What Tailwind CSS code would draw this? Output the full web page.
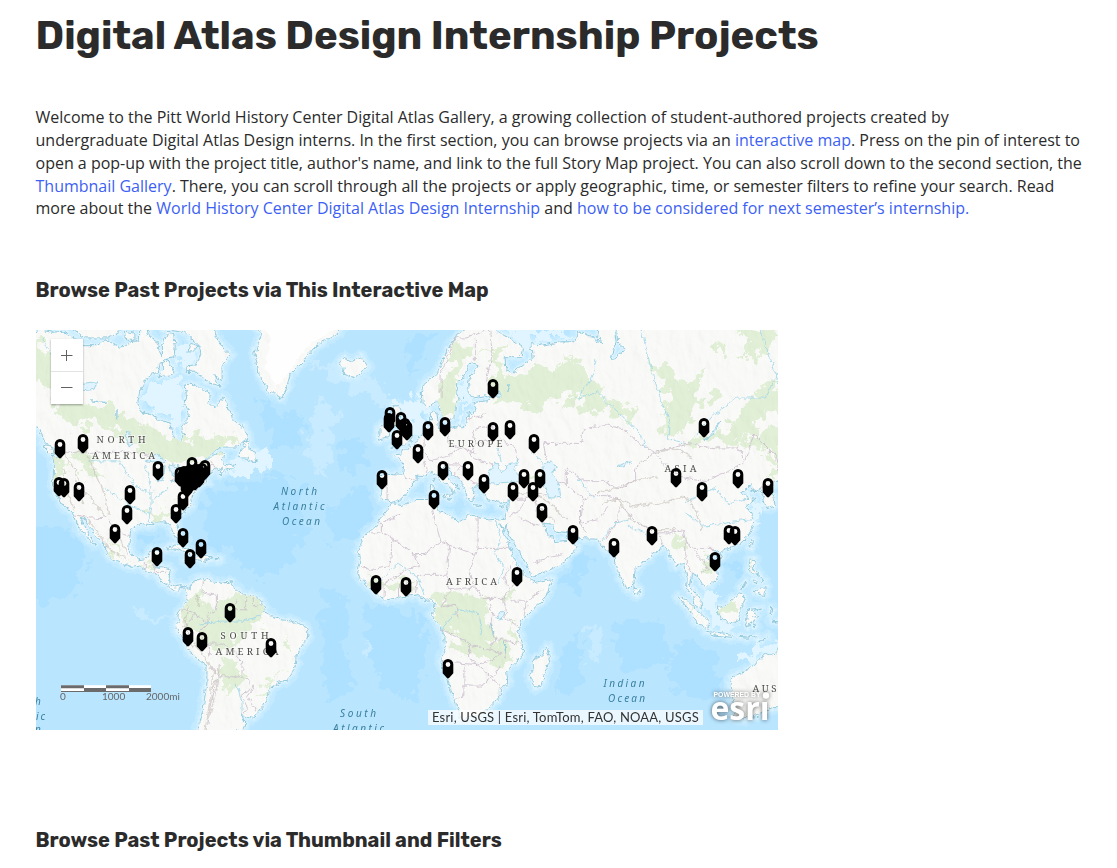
<!DOCTYPE html>
<html lang="en">
<head>
<meta charset="utf-8">
<title>Digital Atlas Design Internship Projects</title>
<script src="https://cdn.jsdelivr.net/npm/@tailwindcss/browser@4"></script>
</head>
<body class="bg-white h-[868px] overflow-hidden text-[#2b2b2b] font-['Open_Sans','Noto_Sans',sans-serif]">
<main class="pl-[35.5px] pt-3">
  <h1 class="h-12 text-[40px] leading-[48px] font-bold whitespace-nowrap font-['Rubik','Inter',sans-serif]">Digital Atlas Design Internship Projects</h1>
  <p class="mt-[46px] text-[16px] leading-[22.85px] whitespace-nowrap">Welcome to the Pitt World History Center Digital Atlas Gallery, a growing collection of student-authored projects created by<br>undergraduate Digital Atlas Design interns. In the first section, you can browse projects via an <a class="text-[#3d5ff5]">interactive map</a>. Press on the pin of interest to<br>open a pop-up with the project title, author's name, and link to the full Story Map project. You can also scroll down to the second section, the<br><a class="text-[#3d5ff5]">Thumbnail Gallery</a>. There, you can scroll through all the projects or apply geographic, time, or semester filters to refine your search. Read<br>more about the <a class="text-[#3d5ff5]">World History Center Digital Atlas Design Internship</a> and <a class="text-[#3d5ff5]">how to be considered for next semester’s internship.</a></p>
  <h2 class="mt-[57.750px] h-6 text-[20px] leading-6 font-bold whitespace-nowrap font-['Rubik','Inter',sans-serif]">Browse Past Projects via This Interactive Map</h2>

  <div class="relative mt-7 ml-[0.5px] w-[742px] h-[400px] overflow-hidden bg-[#b9e5ff]">
    <svg class="block" width="742" height="400" viewBox="36 330 742 400">
      <defs>
        <filter id="rough" x="0" y="0" width="100%" height="100%"><feTurbulence type="fractalNoise" baseFrequency="0.18" numOctaves="3" seed="4" result="n"/><feDisplacementMap in="SourceGraphic" in2="n" scale="6" xChannelSelector="R" yChannelSelector="G"/></filter>
        <filter id="rougher" x="0" y="0" width="100%" height="100%"><feTurbulence type="fractalNoise" baseFrequency="0.08" numOctaves="4" seed="9" result="n"/><feDisplacementMap in="SourceGraphic" in2="n" scale="30" xChannelSelector="R" yChannelSelector="G"/></filter>
        <filter id="relief" x="0" y="0" width="100%" height="100%"><feTurbulence type="fractalNoise" baseFrequency="0.11 0.06" numOctaves="4" seed="3"/><feDiffuseLighting surfaceScale="2.2" lighting-color="#fff"><feDistantLight azimuth="315" elevation="60"/></feDiffuseLighting></filter>
        <clipPath id="landclip"><path id="clipP"/></clipPath>
        <path id="land"/>
        <g id="pin"><path fill="#000" fill-rule="evenodd" d="M-5.300 5.300A5.300 5.300 0 0 1 5.300 5.300V14.300L0.800 19.200H-0.800L-5.300 14.300ZM0 3.100A2.400 2.400 0 1 0 0 7.900A2.400 2.400 0 1 0 0 3.100Z"/></g>
      </defs>
      <rect x="36" y="330" width="742" height="400" fill="#b9e5ff"/>
      <g id="deep" fill="#aee0ff" filter="url(#rougher)"></g>
      <g id="mid" filter="url(#rougher)"></g>
      <g fill="none" stroke-linejoin="round" filter="url(#rough)">
        <use href="#land" stroke="#c9ecff" stroke-width="13" opacity=".6"/>
        <use href="#land" stroke="#d3f0ff" stroke-width="7" opacity=".8"/>
        <use href="#land" stroke="#e0f5ff" stroke-width="3"/>
      </g>
      <g id="shelf" fill="#e0f5ff" filter="url(#rougher)"></g>
      <g filter="url(#rough)"><use href="#land" fill="#fafaf8" stroke="#8ec8de" stroke-width="1"/></g>
      <g clip-path="url(#landclip)">
        <g id="green" fill="#e1f0d6" filter="url(#rougher)"></g>
        <rect x="36" y="330" width="742" height="400" filter="url(#relief)" style="mix-blend-mode:multiply" opacity=".1"/>
        <g id="mount" fill="none" stroke="#b9b2aa" stroke-linecap="round" stroke-linejoin="round" filter="url(#rough)"></g>
      </g>
      <g filter="url(#rough)">
        <g id="ice" fill="#fefefe"></g>
        <g id="borders" fill="none" stroke="#cdc2cf" stroke-width=".9"></g>
        <g id="rivers" fill="none" stroke="#a5d8ea" stroke-width=".9"></g>
        <g id="lakes" fill="#dff4fe" stroke="#92cbe0" stroke-width=".8"></g>
      </g>
      <g font-family="'Noto Serif','DejaVu Serif',serif" font-size="9.600" fill="#4d4d49" stroke="#fafaf8" stroke-width="2" paint-order="stroke" stroke-opacity=".7">
        <text x="96.500" y="443" textLength="49">NORTH</text><text x="92" y="459" textLength="63">AMERICA</text>
        <text x="220.500" y="639" textLength="48">SOUTH</text><text x="215.500" y="655" textLength="63">AMERICA</text>
        <text x="448.500" y="447" textLength="54">EUROPE</text><text x="446" y="585" textLength="51">AFRICA</text>
        <text x="664.500" y="471.500" textLength="32">ASIA</text><text x="752.500" y="691.500" letter-spacing="2.600">AUS</text>
      </g>
      <g font-family="'Noto Sans','Open Sans',sans-serif" font-style="italic" font-size="10" fill="#397f9d">
        <text x="281" y="495" textLength="36">North</text><text x="273.500" y="510" textLength="51">Atlantic</text><text x="282" y="524.500" textLength="38">Ocean</text>
        <text x="340" y="717" textLength="36">South</text><text x="333" y="732" textLength="51">Atlantic</text>
        <text x="603.500" y="687" textLength="41">Indian</text><text x="608" y="702" textLength="37">Ocean</text>
        <text x="35" y="705">h</text><text x="36" y="720" letter-spacing="2">ic</text><text x="35" y="733">n</text>
      </g>
      <g id="pins"></g>
      <g stroke="#6b6b6b" stroke-width="1"><rect x="61" y="685.200" width="90" height="6" fill="#fff" stroke="none"/><path d="M61 686.700H84M106 686.700H129M84 689.500H106M129 689.500H151" stroke-width="3"/><path d="M61 691.500H151"/></g>
    </svg>
    <div class="absolute left-[15px] top-[9px] w-8 h-[65px] bg-white shadow-[0_1px_2px_rgba(0,0,0,0.35)]">
      <svg width="32" height="65" fill="none" stroke="#606060"><path d="M10 16.500H21.500M15.500 11V22M10 48.500H21.500"/><path d="M0 32.500H32" stroke="#e3e3e3"/></svg>
    </div>
    <div class="absolute left-[24px] top-[360px] w-32 h-3 text-[10px] leading-3 text-[#666] font-['Lato',sans-serif]"><span class="absolute left-0">0</span><span class="absolute left-[42px]">1000</span><span class="absolute left-[86px]">2000mi</span></div>
    <div class="absolute left-[392px] top-[380px] w-[275px] h-[15px] bg-white/70 pl-1 text-[13px] leading-[15px] tracking-[0.2px] whitespace-nowrap text-[#323232] font-['Lato',sans-serif]">Esri, USGS | Esri, TomTom, FAO, NOAA, USGS</div>
    <svg class="absolute left-[670px] top-[356px] drop-shadow-[0_0_2px_rgba(0,0,0,0.6)]" width="72" height="44" fill="#fff">
      <text x="7.500" y="10.500" font-family="Liberation Sans" font-weight="700" font-size="6.500" textLength="47" lengthAdjust="spacingAndGlyphs">POWERED BY</text>
      <text x="4.500" y="34" font-family="Open Sans, sans-serif" font-weight="700" font-size="32" textLength="59" lengthAdjust="spacingAndGlyphs">esrı</text><circle cx="60" cy="9.500" r="3.200"/>
    </svg>
  </div>
  <h2 class="mt-[98px] h-6 text-[20px] leading-6 font-bold whitespace-nowrap font-['Rubik','Inter',sans-serif]">Browse Past Projects via Thumbnail and Filters</h2>
</main>
<script>
// Web Mercator at zoom 2: 1024px per 360 degrees
const P=s=>s.trim().split(/\s+/).map(q=>{const [a,b]=q.split(',').map(Number);return (407+a*2.8444).toFixed(1)+' '+(612.6-162.97*Math.log(Math.tan(Math.PI/4+b*Math.PI/360))).toFixed(1)}).join('L');
const $=i=>document.getElementById(i);
const land=[
// Americas
"-140,74 -135,69 -129,70 -125,69.7 -121,69.8 -117,69 -114,68 -109,68 -106,68.8 -101,67.8 -97,68.3 -94,69 -94,71.5 -90,69 -88,68.5 -87,67.2 -86,66.5 -86,68 -84,69.7 -82,69.5 -81.5,68 -82,66.5 -85,66.2 -87,65.3 -88,64.2 -91,63.6 -92.5,62.5 -94,61 -94.7,59 -92.5,57 -90,57 -87,56 -83,55.2 -82.3,53 -81,52 -79.5,51.4 -78.8,52.5 -79.5,54.5 -77,56 -76.6,57.3 -78.5,58.8 -77.5,60 -78,62.3 -74,62.3 -71.5,61.2 -69.5,60.9 -70,59 -67.5,58.3 -66,58.8 -64.6,60.3 -62.5,58 -61.5,56.5 -60,55 -57.5,54.5 -55.8,52.6 -57,51.5 -60,50.2 -66,50.2 -69,48.5 -71,46.9 -67.5,48.5 -65,49.2 -64.5,48.2 -65,47 -63.8,46.2 -61.5,45.6 -60,46.5 -61,45.2 -64,44.5 -65.8,43.5 -66,44.5 -64.5,45.4 -67,44.8 -70,43.7 -70.8,42.5 -70,41.7 -72,41.2 -74,40.6 -74.2,39.5 -75.5,38 -76,37 -75.6,35.3 -77.5,34.3 -79.5,33 -81.3,31.5 -81.3,30 -80.1,27 -80.4,25.2 -81.8,26 -82.7,28 -84,30 -86,30.4 -89.5,30.3 -89.3,29.2 -91,29.3 -94,29.6 -97,28 -97.5,25.5 -97.8,22.5 -96.3,19.3 -94.5,18.2 -92,18.6 -90.6,19.8 -90.3,21 -87,21.5 -87.6,19 -88.3,17 -88.9,15.9 -86,15.9 -83.3,15 -83.6,12 -83.3,10 -81.8,9 -79.7,9.5 -77.5,8.6 -76.8,8 -75.5,10.5 -74.5,11 -72,12 -71.5,11 -70,12 -68.3,10.8 -65,10.2 -62,10.7 -60.5,8.5 -57.5,6.3 -54,5.8 -51.5,4.3 -50,1.5 -50.5,0 -48.5,-0.8 -44.5,-2.5 -41,-2.9 -38.5,-3.8 -35.3,-5.3 -34.8,-7.5 -35.3,-9.5 -38,-12.8 -39,-15 -39.2,-18 -40.5,-21 -42,-23 -45,-23.8 -48.5,-26 -48.7,-28.4 -50.5,-31 -52.5,-33.5 -54.5,-34.8 -58,-34 -57,-36 -57.7,-38.2 -62,-39 -63,-42 -73.8,-42 -73.5,-38 -71.7,-33 -71.4,-30 -70.4,-25 -70.3,-18.4 -73,-16.5 -76.2,-14 -77.3,-12 -79,-8.5 -81.2,-6 -81,-4 -80,-2.8 -80.9,-1.5 -80,0.5 -78.8,1.5 -77.3,3.8 -77.5,7 -78.3,8.5 -79.5,8.9 -80.3,7.5 -82.8,8.2 -84,9.5 -85.8,10.5 -87.6,13 -91,14 -94,16.1 -96.5,15.7 -100,17 -103.5,18.5 -105.5,20.3 -105.6,22.5 -109,25.8 -112,29 -113,31.2 -114.7,31.7 -114,30 -112,27 -110,24 -109.5,23 -112,24.8 -112.2,26 -115,28 -116,30.3 -117.2,32.7 -118.5,34 -120.6,34.6 -122,36.7 -123.8,39 -124.4,40.4 -124,44 -124,46.3 -124.7,48.3 -122.5,47.5 -122.8,49 -127,51 -130,54.5 -134,58 -140,60",
"-89,73 -86,70.2 -79,69.8 -76,69 -73,68 -72.5,67 -74,65.3 -77.5,65.2 -78,64.3 -74,64.4 -71,62.8 -66,62 -68,63.7 -65,63 -65,65.5 -62,66.7 -64,67.5 -67,69 -68,70.5 -72,73",
"-86,65.7 -84,65.9 -81.5,64.2 -83,63.8 -86,63.6 -87,63.5 -86,64.5","-117,70 -113,69 -105,69 -101,69.7 -104,72 -118,72","-99,69.8 -96,69.6 -96,68.7 -98.5,68.7","-76,68.3 -73.5,68 -75,67.3 -77,67.3",
"-59.3,47.8 -57,51.4 -55.6,51.5 -56,49.9 -53.5,49.2 -53,46.8 -55.5,47 -56,47.6","-128.3,50.7 -125.5,50.2 -123.5,48.5 -125.5,48.8",
"-58,74 -54,71 -51,69.5 -53.5,67 -52,64 -49,61.5 -44,60 -42.5,61.5 -41,64 -37,65.7 -32,68 -25,69.5 -22,70.5 -22,74",
"-84.9,21.9 -82,23.1 -79,22.5 -75.5,20.8 -74.2,20.2 -77.5,19.9 -78,20.8 -81,21.7","-74.3,18.4 -73,19.8 -70,19.7 -68.5,18.6 -71,17.8","-78.2,18.3 -76.3,18.1 -77.3,17.8","-67.1,18.4 -65.7,18.3 -67,18","-78.2,25 -77.7,24.2 -78,23.9",
// Europe, Africa and Asia
"22,70.5 18,69.5 14.5,67.5 12.5,65.8 10.5,64 6,62.3 5,61 5.3,59 7,58 9,59 10.7,59.5 11.5,58.5 12.8,56 14.3,55.5 16.5,56.5 17,58.6 18.8,59.9 17.2,61 17.5,62.5 20.5,63.8 22,65.6 25,65.2 24,64.4 21.3,63 21.5,61 23,60 27,60.4 30,60 28,59.5 23.5,59.2 24.3,58 23.5,57 21.5,57.4 21,55.3 19.8,54.5 18.5,54.7 14,54 11,54 10.8,56 10.5,57.6 8.2,57 8.5,54 6,53.4 4.5,52.3 3,51.3 1.6,50.8 0.2,49.5 -1.6,49.6 -1.8,48.6 -4.7,48.4 -2,47.2 -1.2,46 -1.6,43.4 -8,43.7 -9.2,43 -8.8,41 -9.4,38.8 -8.9,37 -6.4,36.8 -5.4,36.1 -2.2,36.8 -0.5,38 0,39.5 3.2,42 3.2,43.2 6,43.1 8.8,44.4 10.4,43.5 12.3,41.7 15,40.3 16,38.8 15.7,38 17,39 17,40.5 18.5,40 16,41.8 13.8,43 12.3,44.5 12.5,45.5 13.8,45.6 15,44.5 19.3,42 19.4,40.5 21.2,38 21.8,36.8 23,36.6 24,38 22.8,39.3 23,40.5 26,40.8 28.8,41.1 26.5,40.2 26.8,38.5 28,36.9 30.5,36.5 32.5,36.1 36,36.8 35.8,35 34.4,31.5 32,31.2 29,31 25,31.6 21.5,32.8 20,31 18,30.4 15.3,32.3 11,33.5 10.4,35 11,37 8,36.9 3,36.9 -2,35.2 -5.5,35.8 -6.8,34 -9.7,31 -10,29.4 -13,27.7 -16,24 -17,21 -16.3,19 -17.4,14.7 -16.7,12.3 -13.3,9 -11,6.7 -7.6,4.4 -4,5.2 1,5.9 4.4,6.3 6,4.3 8.7,4.5 9.8,3 9.5,0.5 8.8,-1 12,-5 13.3,-8.8 13.6,-12.5 11.8,-16.5 14.5,-22.8 15.3,-27 18,-32 18.4,-34.2 20,-34.8 25.6,-34 30,-31 32.8,-28 32.8,-26 35.4,-24 35,-20 40.5,-15.5 40.6,-11 39,-6.5 40,-3 44,1 48.5,5 51.2,11.9 44.5,10.5 43,11.8 39.5,15.3 37.2,19.5 35.6,24 32.6,29.8 34.2,27.8 35,29.5 34.7,28 39,21.5 42.8,15.5 43.5,12.7 45,12.8 52,15.6 55.5,17.8 59.8,22.5 56.5,26.2 56,24.6 51.5,24.2 51.3,26 50.2,25.5 48,29.8 50.5,29.8 52,27.6 56.5,27 57.3,25.6 61.5,25.1 66.7,25 68,23.5 70.5,20.8 72.7,21.5 73,17.5 74.8,13 77.5,8.1 79.8,10.3 80.2,15 82.3,16.7 86.8,20.5 90.5,22.7 92.3,20.7 94.3,16.2 97.3,16.7 98.5,12 98.3,8.2 100.4,6 101.3,3 103.5,1.3 103.4,4.5 100.3,8.5 99.3,9.5 100,13.4 102.5,12 104.8,8.6 107,10.4 109.3,12 108.8,15.3 105.8,19 108,21.6 110,20.3 113.5,22.2 117,23.5 119.5,25.5 121.8,29 121.8,31 119.3,35 122.4,37 119,37.3 117.7,39 121,41 121.3,39 124.3,40 125,37.8 126.4,34.5 129.3,35.3 129,37.5 127.5,39.8 130,42 133,43 138,45 138,76 80,76 80,72 73.5,71.5 74,68.5 77,67.6 73,66.3 71.5,66.4 73.5,68.5 72.5,71 68,71 67,69.2 69,68.3 65,69.2 60,69.8 59,68.5 54,68.5 46,68 43.5,68.5 44,66.2 40,65 37,64 34.7,64.5 34.5,66.5 40.5,66.5 41,67.7 36,69 31,70 26,71.5",
"-24,65.5 -22,66.4 -20,65.8 -16,66.5 -13.7,65 -18.5,63.4 -22.5,63.9 -22,64.8",
"-5.7,50.1 -3,51.3 -5,51.8 -4.5,53.2 -3,53.5 -3.5,54.8 -5,54.8 -6,56.5 -5,58.6 -3,58.6 -2,57.5 -3,56 -1.5,55 0.3,53 1.7,52.7 1,51.3 -1,50.7 -3.5,50.3","-10,51.7 -9.8,54.2 -7.3,55.3 -5.6,54.6 -6.3,52.3",
"8.2,39 8.3,41 9.6,40.8 9.5,39.2","8.7,42 9.4,43 9.5,41.5","12.5,38 15.5,38.2 15.1,36.7","23.6,35.5 26.3,35.2 24.8,34.9","32.4,35 34.5,35.6 33.6,34.7","20.5,60.3 19.7,60.3 20,60",
"49.3,-12 50.4,-15.5 49.5,-18 47,-25 45,-25.5 43.3,-22 44.4,-19.5 44.4,-16.2 47.5,-15","79.8,9.8 81.8,7.5 80.6,6 79.8,7",
"95.3,5.6 98,4.5 103,0 106,-3 105.8,-5.8 102.3,-4 98.8,1.5","105.2,-6.8 108.5,-6.8 114.4,-7.7 114,-8.7 108,-7.8","109.2,2 111.5,1.8 115.5,5.5 117,7 119,5 117.5,1 116,-3.8 111,-3 109.2,-0.3","119.5,0.5 121,1.2 125,1.6 121,0.5 123.3,-1 121.5,-2 122.5,-5 121,-3 119.6,-5.5 119,-2.8",
"120.3,16.3 120.7,18.5 122.2,18.3 121.7,15.8 124,13 120.7,13.9","122,7 124,8.5 126.3,8.7 125.7,6 124,6.5","122,10.5 122.2,11.8 123.4,10.3","124.5,12.3 125.5,11 124.8,10.3","117.3,8.4 119.4,11.3 119.2,10.2","120.2,23 121.5,25.2 121.8,24.6 120.9,22","108.7,19.3 110.8,20 110,18.5","116,-8.3 119,-8.5 123,-8.4 119,-9","123.6,-10.2 127,-8.4 125,-9.3","127.8,1.8 128.6,1 128,-0.8","128,-3 130.5,-3.2 129,-3.4",
"138,-12 136,-12 132.5,-11.2 130.5,-12.5 129.5,-15 126.5,-13.9 123.8,-16.5 122.2,-18.2 117.5,-20.7 114.2,-22 113.6,-24.5 114,-27 115.3,-31 115.2,-34.3 118,-35 123.5,-33.9 129,-31.6 133,-32 138,-34"
];
const d=land.map(s=>'M'+P(s)+'Z').join('');
$('land').setAttribute('d',d);$('clipP').setAttribute('d',d);
const add=(id,list,close,attr='')=>$(id).innerHTML=list.map(s=>`<path d="M${P(s)}${close?'Z':''}" ${attr}/>`).join('');
add('deep',["-70,39 -55,41 -45,45 -38,40 -36,28 -42,15 -52,12 -60,20 -72,26","-45,58 -52,60 -47,50 -38,50 -36,56","-28,34 -15,42 -12,34 -18,24 -26,22","-30,8 -20,6 -22,-8 -18,-25 -28,-30 -30,-15","-15,2 5,0 8,-14 2,-30 -10,-25 -14,-12","-25,50 -16,52 -14,46 -22,44","-2,68 10,70 2,64","-120,28 -112,20 -118,5 -135,5 -135,28","53,-15 62,-5 60,-25 52,-28","72,-3 90,-2 92,-18 75,-20","95,-10 110,-14 108,-28 96,-28 92,-20","112,18 118,18 116,12 112,13","58,20 66,20 60,8 54,10","-95,26 -86,27 -88,23 -95,23"],1);
add('mid',["-35,52 -30,60 -25,58 -28,50 -29,42 -32,44","-14,-8 -12,-12 -13,-18 -15,-14","62,-6 66,-10 64,-18 67,-18 70,-10 65,-3","-84,-2 -96,1 -92,-3","-35,66 -10,63 -5,58 -14,60"],1,'fill="#c9ebff"');
add('shelf',["-94,60 -90,63 -80,63 -78,60 -78,55 -80,52 -84,56","-62,47 -50,50 -48,45 -54,43 -62,43","-5,59 5,60 7,57 8,54 3,52 1,54 -2,56","20,64 18,61 20,57 15,55 20,55 22,60","35,70 55,70 58,69 46,69 42,67","104,6 108,8 110,4 116,-5 108,-5 104,0","118,39 122,37 125,34 124,30 122,31 120,35","-88,68 -75,68 -76,65 -84,66","116,-18 124,-12 130,-10 134,-11 128,-15"],1);
add('green',["-132,69 -122,66 -118,62 -112,59 -100,58 -95,56 -88,54 -80,51 -76,53 -68,52 -60,53 -58,51 -66,49 -72,47 -80,46 -90,48 -96,50 -103,54 -110,55 -116,54 -122,56 -126,61 -133,64","-124,48 -120,48 -121,43 -122,39 -124,41","-117,49 -111,49 -107,42 -110,43 -115,45","-84,35 -80,38 -76,41 -82,37","-94,32 -88,34 -82,32 -86,31","-105,26 -100,19 -96,17 -103,20","-92,18 -88,18 -90,15",
"-79,2 -72,6 -66,1 -62,8 -54,6 -50,3 -50,-2 -56,-6 -62,-11 -66,-14 -70,-12 -76,-7 -79,-2","-66,-16 -58,-17 -58,-23 -64,-28 -66,-22","-42,-18 -50,-26 -54,-28 -49,-24","-42,-8 -38,-11 -41,-15",
"12,56 17,57 19,60 17,62 20,66 24,69 19,68 14,65 12,61","24,66 36,69 32,65 38,63 46,65 60,66 62,62 50,60 46,57 38,59 30,59 31,63 28,68","56,67 68,62 72,58 64,57 60,60 56,57 58,62","84,66 92,65 98,62 104,65 102,58 96,54 92,52 90,57 92,61 88,63","98,51 104,53 110,53 118,57 124,62 134,62 135,57 126,58 120,53 112,51","108,68 112,68 112,67 108,67","116,67 128,71 130,69 124,67","104,60 112,61 108,58","98,51 118,52 134,55 132,47 124,50 112,51","125,48 133,46 129,43","72,60 82,58 80,56 70,57","118,70 128,70 122,65",
"9,6 18,7 28,5 30,1 28,-4 32,-8 27,-12 18,-10 13,-5 9,0","26,-10 34,-12 38,-16 33,-19 26,-15 20,-14 14,-12 14,-10","36,-3 39,-7 38,-10 35,-6","-14,11 -8,9 -3,8 4,9 2,10 -8,12","34,9 38,7 36,4 33,7","94,28 98,27 98,20 94,22","103,15 108,14 107,19 104,18","110,2 116,4 117,0 113,-1","97,4 102,0 99,1","121,16 122,18 122,15","126,-13 134,-12 132,-15","44,43 48,41 42,42"],1);
add('mount',["-122,50 -117,45 -114,40 -110,36 -106,32","-121,45 -119,38 -117,34","-112,48 -109,43 -106,38 -105,33","-117,42 -114,36","-112,31 -108,26 -104,21 -99,19","-101,25 -98,20","-77,2 -78,-3 -76,-10 -71,-16 -68,-20 -69,-27 -70,-34 -71,-38","-74,6 -73,2","-66,-18 -67,-26 -69,-33","67,39 74,40 80,42 88,43","68,36 74,37 80,35 90,36 98,38","74,37 79,31 86,28 94,28","98,38 102,33 104,28","36,38 44,39 50,36 56,31","45,36 52,30","37,9 38,13","88,49 94,50 100,48"],0,'stroke-width="1.3" opacity=".5"');
add('ice',["-56,74 -48,69 -50,65 -46,62 -42,64 -35,68 -26,70 -24,74"],1);
add('borders',["-123,49 -95,49 -89,48","-83,42 -79,43 -75,45 -71,45 -69,47 -67,45","-117,32.5 -111,31.5 -106,31.8 -103,29 -99,26.5 -97,26","-92,17.5 -92,14.5","-89,17 -89,14 -84,14","-72,11 -72,7 -67,6 -67,1 -70,-1 -70,-4 -75,0 -79,1","-70,-4 -73,-7 -70,-11 -69,-16","-79,-5 -76,-3 -75,0","-60,5 -61,1 -57,1 -56,6","-54,5 -54,2 -51,3","-70,-11 -65,-11 -60,-14 -58,-18 -58,-22 -63,-22 -66,-22 -69,-18","-67,-23 -69,-30 -70,-37","-58,-22 -54,-25 -58,-28 -56,-32 -58,-34","-54,-25 -56,-28 -53,-33",
"12,60 12,64 17,69 21,69 28,70","24,66 24,69","30,60 28,63 30,67 29,70","28,57 21,56","24,54 30,55 31,52 24,51 23,54","32,52 38,50 39,47","24,51 22,48 30,46","14,54 15,51 19,50 24,49","6,53 6,49 8,47 14,48 19,50","-1,43 3,42","-7,42 -7,37","6,47 7,44","14,46 19,46 22,44 22,42 26,41","19,46 17,44 19,42","36,37 42,37 45,39 49,38","42,37 39,33 36,32","45,37 46,32 48,30","39,32 46,29","44,17 50,19 55,20","49,47 48,51 54,51 61,51 62,54 70,55 76,54 82,51 87,49 80,45 80,42 74,40 69,42 62,42 56,45 56,41 52,42","56,41 62,37 66,38 70,38 74,37","61,35 61,30 63,27","62,37 61,30 67,31 71,35","70,25 74,31 75,35 79,32 81,30 88,27 92,27 97,28 98,24 101,22 108,22","89,26 90,23","98,24 98,18 100,14","101,21 104,18 106,15 103,14","87,49 92,45 97,43 105,42 112,44 119,47 116,50 108,50 98,51 87,49","119,47 122,53 130,48 131,43","124,40 130,42",
"-9,27 -9,30 -2,33","-9,27 -13,27","-9,27 -5,25 3,20 6,20 12,24 10,30 9,34","-5,25 -6,16 -12,15 -16,16","3,20 4,16 0,15 -5,12 -8,10 -8,5","12,24 15,23 24,20 25,22 25,32","25,22 36,22","15,23 14,13 4,13 3,7","24,20 22,14 24,9 15,8 14,13","24,9 27,5 34,5 36,8 34,12 37,17","34,5 35,0 34,-1 30,-1 29,3","34,-1 39,-5","36,4 42,4 41,-2","42,4 48,8","30,-1 29,-5 31,-9 29,-13 24,-12 22,-11 17,-8 12,-6","15,8 12,2 17,3 18,-2","29,-13 33,-14 31,-16 25,-18 22,-16 22,-11","12,-17 25,-18","20,-18 20,-28 17,-29","20,-25 26,-25 30,-22 33,-26","25,-18 30,-22 33,-18","31,-9 40,-11","34,-10 35,-16","0,11 1,6","-3,10 -3,5"],0);
add('rivers',["66,66 66,64 60,60 67,61 71,59 77,56 82,53 84,50","82,71 85,66 89,60 92,56 92,52 98,51","130,64 126,60 116,60 108,57 102,53","124,70 128,66 131,62","-115,62 -123,65 -128,69","-92,46 -90,40 -90,35 -91,30","-112,47 -101,47 -96,41 -90,38","-106,40 -97,35 -91,33","-84,40 -89,37","-73,-4 -65,-3 -58,-3 -51,-1","-60,-24 -58,-30 -58,-34","31,31 33,25 31,20 34,16 32,10","-11,10 -3,17 4,12 6,6","12,-6 18,1 25,0 26,-8","78,31 73,30 68,24","78,29 88,25","98,33 104,29 112,30 121,31","98,36 108,40 113,36 119,37","44,49 48,46","32,50 33,47","66,37 60,43"],0);
add('lakes',["-92,47 -88,48.7 -84.7,47 -87,46.5","-87.5,42 -86,42 -85,45.8 -87,45.5","-84,46 -80,45.5 -82,43","-83,41.6 -79,42.8 -81.5,42.8","-79.5,43.3 -76.5,44 -79,43.8","-99,53.5 -98,50.5 -96.5,50.5 -97.5,53.5","-117,61 -110,61.5 -109,62.7 -114,62.5","-124,66 -118,65.5 -120,67","-111,59.5 -106,59.2","-102,57.8 -102,56","28,41.2 31,41.2 36,41.7 41.5,41.7 37.5,44.7 39,47 35,46 35,45 33,44.6 31,46.6 28.6,44","47,43 47.5,45.5 51,47 53,45 51,44.5 53.5,41 54,37.5 50,37.3 49,39.5","74,45.3 79,46.7 76,46.5","30,60 32,61.5 33,60.2","35,61 36,62.3","104,51.6 107,53 110,55.7 108,53","32,0.3 34,0.3 33.5,-2.5 32,-2","29.3,-3.5 30.8,-8.5","34,-10 34.8,-14"],1);
const pins=[[60,439],[83,434],[158,461],[59,477],[64,478],[79,482],[130,485],[127,505],[115,524],[183,491],[176,504],[183,528],[157,547],[190,549],[201,539],[230,603],[188,627],[202,632],[271,638]];
// the north-eastern US pins lie on top of each other
const crowd=[[180,467],[192,457],[205,460],[183,469],[186,476],[188,471],[190,474],[193,467],[195,471],[197,464],[199,468],[202,463],[185,470],[187,478],[192,471],[196,466],[184,466],[189,465]];
const east=[[390,407],[389,413],[401,412],[405,418],[407,421],[397,430],[428,421],[445,417],[418,444],[493,379],[493,422],[510,420],[534,434],[443,461],[468,461],[484,474],[382,470],[434,490],[513,482],[540,469],[524,469],[533,482],[542,503],[573,525],[614,538],[652,526],[676,468],[702,482],[704,418],[738,469],[768,478],[729,525],[735,526],[715,552],[517,567],[376,575],[406,577],[448,659]];
$('pins').innerHTML=[...pins,...crowd,...east].map(p=>`<use href="#pin" x="${p[0]}" y="${p[1]}"/>`).join('')+'<path d="M184 475L191 471L208 468V471L191 488L184 484Z"/>';
</script>
</body>
</html>
